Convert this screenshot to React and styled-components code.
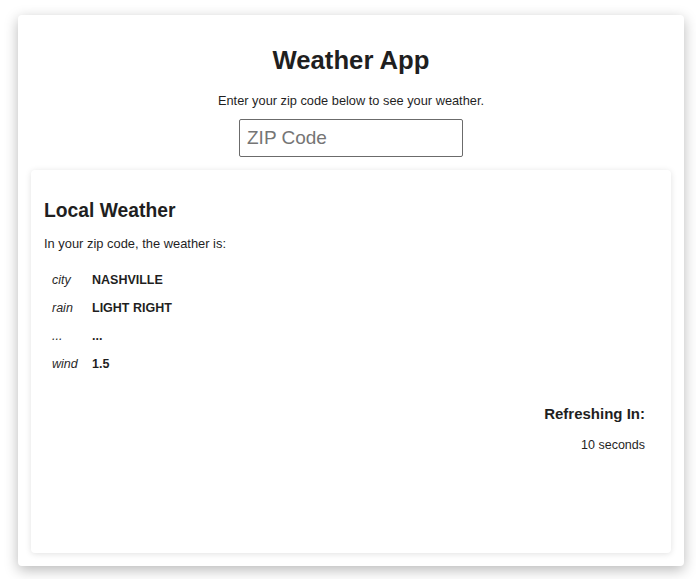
import React from "react";
import styled, { createGlobalStyle } from "styled-components";

const Global = createGlobalStyle`
  html, body { margin: 0; padding: 0; background: #ffffff; }
  body { font-family: "Liberation Sans", Arial, Helvetica, sans-serif; color: #1f1f1f; }
`;

const Page = styled.div`
  padding: 15px 12px 13px 18px;
`;

const Shell = styled.main`
  width: 666px;
  height: 551px;
  box-sizing: border-box;
  background: #fff;
  border-radius: 4px;
  box-shadow: 0 4px 14px rgba(0, 0, 0, 0.28);
  padding: 0 13px 13px;
  display: flex;
  flex-direction: column;
`;

const Header = styled.header`
  display: flex;
  flex-direction: column;
  align-items: center;
`;

const Title = styled.h1`
  margin: 30px 0 0;
  font-size: 25.7px;
  line-height: 30px;
  font-weight: 700;
  color: #1f1f1f;
`;

const Subtitle = styled.p`
  margin: 19px 0 0;
  font-size: 12.8px;
  line-height: 14px;
  color: #1f1f1f;
`;

const ZipInput = styled.input`
  margin-top: 11px;
  width: 224px;
  height: 38px;
  box-sizing: border-box;
  border: 1px solid #6b6b6b;
  border-radius: 2px;
  padding: 0 7px;
  font-family: "Liberation Sans", Arial, sans-serif;
  font-size: 19px;
  color: #1f1f1f;
  outline: none;
  &::placeholder { color: #757575; }
`;

const Card = styled.section`
  margin-top: 13px;
  flex: 1;
  background: #fff;
  border-radius: 4px;
  box-shadow: 0 1px 6px rgba(0, 0, 0, 0.12);
  padding: 30px 26px 0 13px;
  display: flex;
  flex-direction: column;
`;

const CardTitle = styled.h2`
  margin: 0;
  font-size: 19.3px;
  line-height: 22px;
  font-weight: 700;
`;

const Intro = styled.p`
  margin: 15px 0 0;
  font-size: 12.9px;
  line-height: 14px;
`;

const List = styled.dl`
  margin: 15px 0 0 8px;
  display: grid;
  grid-template-columns: 40px auto;
  grid-auto-rows: 28px;
  align-items: center;
`;

const Key = styled.dt`
  font-style: italic;
  font-size: 12.5px;
  color: #2a2a2a;
`;

const Value = styled.dd`
  margin: 0;
  font-weight: 700;
  font-size: 12.5px;
  color: #1f1f1f;
`;

const Refresh = styled.div`
  margin-top: 27px;
  display: flex;
  flex-direction: column;
  align-items: flex-end;
`;

const RefreshTitle = styled.h3`
  margin: 0;
  font-size: 15px;
  line-height: 18px;
  font-weight: 700;
`;

const RefreshValue = styled.p`
  margin: 15px 0 0;
  font-size: 12.5px;
  line-height: 14px;
`;

const rows = [
  ["city", "NASHVILLE"],
  ["rain", "LIGHT RIGHT"],
  ["...", "..."],
  ["wind", "1.5"],
];

export default function App() {
  return (
    <>
      <Global />
      <Page>
        <Shell>
          <Header>
            <Title>Weather App</Title>
            <Subtitle>Enter your zip code below to see your weather.</Subtitle>
            <ZipInput placeholder="ZIP Code" />
          </Header>
          <Card>
            <CardTitle>Local Weather</CardTitle>
            <Intro>In your zip code, the weather is:</Intro>
            <List>
              {rows.map(([k, v]) => (
                <React.Fragment key={k}>
                  <Key>{k}</Key>
                  <Value>{v}</Value>
                </React.Fragment>
              ))}
            </List>
            <Refresh>
              <RefreshTitle>Refreshing In:</RefreshTitle>
              <RefreshValue>10 seconds</RefreshValue>
            </Refresh>
          </Card>
        </Shell>
      </Page>
    </>
  );
}
